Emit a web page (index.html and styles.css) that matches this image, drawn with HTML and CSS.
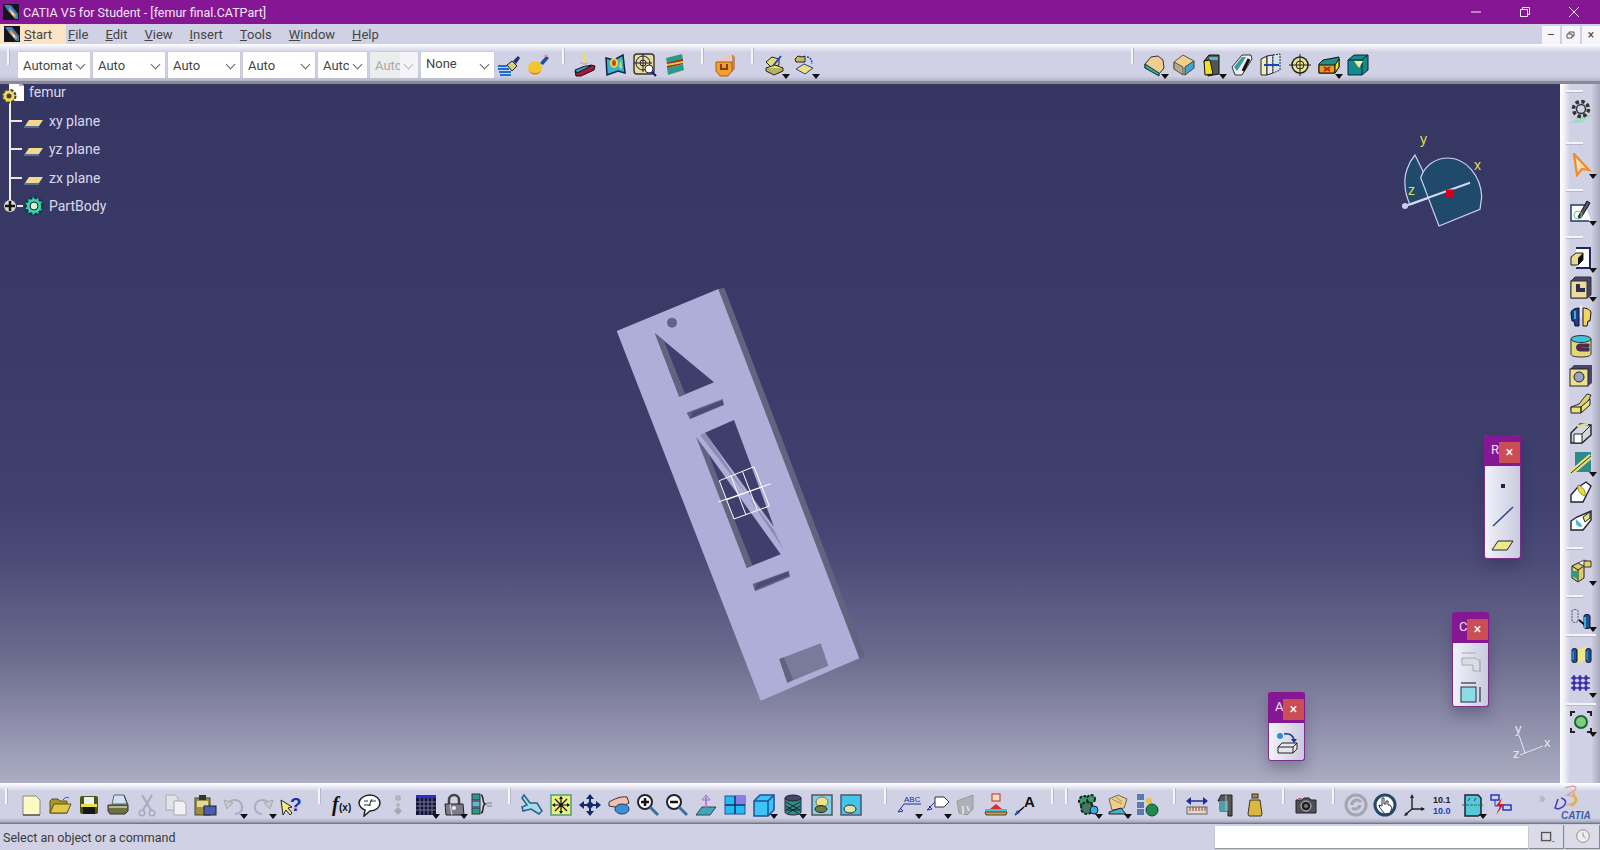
FILE: index.html
```html
<!DOCTYPE html>
<html lang="en">
<head>
<meta charset="utf-8">
<title>CATIA V5 for Student</title>
<link rel="stylesheet" href="styles.css">
</head>
<body>
<header class="title">
  <svg class="logo" viewBox="0 0 16 16"><rect width="16" height="16" fill="#14141e"/><path d="M1 1h7l7 9v5h-3L5 7z" fill="#3f7fb8"/><path d="M6 3l7 8-1 3-6-7z" fill="#e8a050"/><path d="M8 7l3 3-1 2z" fill="#fff"/></svg>
  <span class="title-text">CATIA V5 for Student - [femur final.CATPart]</span>
  <div class="win">
    <svg viewBox="0 0 12 12"><path d="M1 6h10" stroke="#eee" fill="none"/></svg>
    <svg viewBox="0 0 12 12"><path d="M1.5 3.5h7v7h-7zM3.5 3.5v-2h7v7h-2" stroke="#eee" fill="none"/></svg>
    <svg viewBox="0 0 12 12"><path d="M1 1l10 10M11 1L1 11" stroke="#eee" fill="none"/></svg>
  </div>
</header>
<nav class="menu">
  <div class="start">
    <svg class="logo" viewBox="0 0 16 16"><rect width="16" height="16" fill="#14141e"/><path d="M1 1h7l7 9v5h-3L5 7z" fill="#3f7fb8"/><path d="M6 3l7 8-1 3-6-7z" fill="#e8a050"/><path d="M8 7l3 3-1 2z" fill="#fff"/></svg>
    <span><u>S</u>tart</span>
  </div>
  <span class="m m1"><u>F</u>ile</span>
  <span class="m"><u>E</u>dit</span>
  <span class="m"><u>V</u>iew</span>
  <span class="m"><u>I</u>nsert</span>
  <span class="m"><u>T</u>ools</span>
  <span class="m"><u>W</u>indow</span>
  <span class="m"><u>H</u>elp</span>
  <div class="mdi">
    <span class="mb">&#8211;</span><span class="mb"><svg viewBox="0 0 10 10"><path d="M1 4h5v4H1zM3 4V2h5v4H6" stroke="#555" fill="none"/></svg></span><span class="mb">&#215;</span>
  </div>
</nav>
<section class="tb top">
  <i class="grip g0"></i>
  <div class="sel w72">Automat</div>
  <div class="sel w72">Auto</div>
  <div class="sel w72">Auto</div>
  <div class="sel w72">Auto</div>
  <div class="sel w49">Autc</div>
  <div class="sel w48 off">Autc</div>
  <div class="sel w73 up">None</div>
  <span class="b"><svg viewBox="0 0 24 24"><path d="M1 13h9M1 16h11M2 19h12M3 22h11" stroke="#1f6fd0" stroke-width="2"/><path d="M10 12l5-4 5 5-5 5z" fill="#d8cf7a" stroke="#222"/><path d="M16 8l5-5 2 2-4 6z" fill="#1c2f80"/></svg></span>
  <span class="b"><svg viewBox="0 0 24 24"><circle cx="9" cy="15" r="7" fill="#f2c62f"/><path d="M3 18a7 7 0 0 0 12 0 10 10 0 0 1-12 0z" fill="#d65ab0"/><path d="M14 10l6-7 3 2-6 7z" fill="#264a9c"/><path d="M17 3l4-2 1 3z" fill="#e0a080"/></svg></span>
  <i class="grip n"></i>
  <span class="b w30"><svg viewBox="0 0 24 24"><path d="M2 18l16-6 4 1-1 4-13 6H3z" fill="#a8163a" stroke="#111"/><path d="M2 17l10-4 6 0-14 7z" fill="#2fa3b8" stroke="#112"/><path d="M11 1v12" stroke="#e8e05a" stroke-width="2"/><path d="M8 5l3-4 3 4" fill="#e8e05a"/><path d="M7 9c3 3 6 2 8 1" stroke="#d68ac8" fill="none"/></svg></span>
  <span class="b w30"><svg viewBox="0 0 24 24"><path d="M3 5l8 2 9-5 2 18-7-2-11 4z" fill="#37b5c8" stroke="#10224a" stroke-width="1.5"/><ellipse cx="11" cy="10" rx="4" ry="5" fill="#e6d64a"/><ellipse cx="11" cy="10" rx="2" ry="3" fill="#c0452e"/><path d="M18 6l1 10-3-2z" fill="#e6d64a"/></svg></span>
  <span class="b w30"><svg viewBox="0 0 24 24"><rect x="1" y="1" width="20" height="20" rx="3" fill="#e9dc9c" stroke="#333" stroke-width="1.4"/><circle cx="10" cy="10" r="7" fill="none" stroke="#223"/><circle cx="10" cy="10" r="3" fill="none" stroke="#223"/><path d="M10 1v18M1 10h18" stroke="#223"/><circle cx="16" cy="16" r="4" fill="#fff" stroke="#224"/><path d="M19 19l4 4" stroke="#117" stroke-width="2"/></svg></span>
  <span class="b w30"><svg viewBox="0 0 24 24"><path d="M3 5l16-4 1 6-16 4z" fill="#2c9b86"/><path d="M4 10l16-4v5L4 15z" fill="#b01e1e"/><path d="M4 11l16-3v2L4 13z" fill="#e8c93a"/><path d="M4 15l16-4 1 6-16 5z" fill="#2c9b86"/></svg></span>
  <i class="grip"></i>
  <span class="b w30"><svg viewBox="0 0 24 24"><path d="M4 9l15-8 3 3-16 7z" fill="#eec6ae"/><path d="M19 1l3 3v12l-3 3z" fill="#b98a6a"/><path d="M3 9h16v9l-4 5H7l-4-5z" fill="#f0a030" stroke="#b4580c"/><path d="M8 11v5h6v-5" stroke="#8a3c00" fill="none" stroke-width="2"/></svg></span>
  <i class="grip"></i>
  <span class="b w30 dd"><svg viewBox="0 0 24 24"><path d="M3 9l6-5 7 2v6l-8 2z" fill="#e3dc6c" stroke="#222"/><path d="M3 15l9-3 8 3-9 4z" fill="#e9e27a" stroke="#222"/><path d="M3 15v3l8 4 9-4v-3" fill="#b9b25c" stroke="#222"/><path d="M10 13l8-10" stroke="#2244cc" stroke-width="2"/></svg></span>
  <span class="b w30 dd"><svg viewBox="0 0 24 24"><path d="M2 6l3-3 4 1 3-1v6H3z" fill="#c6bb60" stroke="#222"/><path d="M14 4c3 0 5 3 5 7" stroke="#2244cc" fill="none" stroke-width="1.5" stroke-dasharray="2 1"/><path d="M3 16l8-5 9 4-8 6z" fill="#e9e27a" stroke="#2d3ca0"/></svg></span>
  <i class="grip far"></i>
  <span class="b dd"><svg viewBox="0 0 24 24"><path d="M2 11l6-7 7-1 5 4 1 8-5 6-14-6z" fill="#f1cd8e" stroke="#333"/><path d="M2 11l14 9v3L2 15z" fill="#37a5a8" stroke="#133"/></svg></span>
  <span class="b"><svg viewBox="0 0 24 24"><path d="M2 9l9-7 11 6-9 14-11-6z" fill="#f1cd8e" stroke="#554"/><path d="M2 9l9 5v8l-9-6z" fill="#b9a78a" stroke="#554"/><path d="M13 14l9-6v7l-9 7z" fill="#41a6cf" stroke="#345"/></svg></span>
  <span class="b dd"><svg viewBox="0 0 24 24"><path d="M3 8l4 15 11-2V2H8z" fill="#555" stroke="#111"/><path d="M3 8l6-1 3 14-8 1z" fill="#f1e021" stroke="#111"/><path d="M8 4h9v3H9z" fill="#3ec0d8"/></svg></span>
  <span class="b"><svg viewBox="0 0 24 24"><path d="M2 14L12 2h9l1 4-10 16H5z" fill="#eee" stroke="#333"/><path d="M4 14L12 4h4L7 18z" fill="#3b9ba0"/><path d="M13 18l6-12" stroke="#111" stroke-width="3"/></svg></span>
  <span class="b"><svg viewBox="0 0 24 24"><path d="M2 6l6-3v19H2z" fill="#f3edb8" stroke="#223"/><path d="M8 3l6-1v18l-6 2z" fill="#e8e8f0" stroke="#223"/><path d="M14 2l7-1v16l-7 3z" fill="#cfe6ee" stroke="#223" stroke-dasharray="2 1"/><path d="M5 12h15" stroke="#2244aa" stroke-width="2"/></svg></span>
  <span class="b"><svg viewBox="0 0 24 24"><circle cx="12" cy="12" r="8" fill="#ece48c" stroke="#222" stroke-width="1.5"/><circle cx="12" cy="12" r="4" fill="none" stroke="#222"/><path d="M12 1v22M1 12h22" stroke="#222"/></svg></span>
  <span class="b dd"><svg viewBox="0 0 24 24"><path d="M2 11l4-4 16-3v10L18 20H2z" fill="#1e8f8a" stroke="#111"/><path d="M2 12h16v8H2z" fill="#e8a01c" stroke="#111"/><path d="M18 12l4-6v8l-4 6z" fill="#f1e021" stroke="#111"/><path d="M7 14l6 4M13 14l-6 4" stroke="#c02020" stroke-width="2"/></svg></span>
  <span class="b"><svg viewBox="0 0 24 24"><path d="M2 7l6-5h14v15l-6 5H2z" fill="#138a8c" stroke="#123"/><path d="M2 7h14v15M16 7l6-5" stroke="#123" fill="none"/><path d="M8 8h9l-4 7z" fill="#f5ec8a"/></svg></span>
</section>
<main class="work">
  <div class="view">
    <svg class="scene" viewBox="0 84 1560 699">
      <polygon class="side" points="718.3,289 724.3,287.7 865.3,657.3 859.3,658.3"/>
      <polygon class="face" points="616.7,331 718.3,289 859.3,658.3 760.7,700.7"/>
      <circle class="hole" cx="672" cy="322.7" r="5"/>
      <polygon class="void" points="655,333.3 714,382.3 679.3,396.7"/>
      <polygon class="side" points="655,333.3 664,341 685,394 679.3,396.7"/>
      <polygon class="side" points="686.7,412.7 722.7,399 724,405 690,419.3"/>
      <polygon class="slot" points="692,412.3 722.5,400.5 723.500,404.500 690.500,418"/>
      <polygon class="void" points="705,432.7 734,420 774,527"/>
      <polygon class="wall" points="700,435 705,432.7 783.3,549.3 774,530"/>
      <polygon class="void" points="708,453 780.7,554.3 746.7,567.7"/>
      <polygon class="side" points="696,436.7 708,453 752.7,565.7 746.7,567.7"/>
      <polygon class="side" points="752.7,584 788.7,570.7 790,576.7 755,591.3"/>
      <polygon class="slot" points="757,583.500 788,572 789,575.500 755,589.500"/>
      <polygon class="floor" points="779.3,659 820.7,643.3 828.3,665.7 787.3,682.7"/>
      <polygon class="side" points="779.3,659 784,657.5 793.3,680 787.3,682.7"/>
      <g class="grid">
        <path d="M719.3,480.7L754,466.7 769.3,506 734,519z"/>
        <path d="M731,476l15,39M742.500,471.500l15,39M726,500L762,487"/>
        <path d="M718.300,502L771,483.700"/>
      </g>
      <g class="compass">
        <path class="fan" d="M1415,155c-7,8-11,20-10,30 0,8 3,15 5,20l25-9z"/>
        <path class="fan" d="M1420.700,177.700C1425,165 1436,158 1448,158c18,0 33,18 33.700,38.700l-1.700,12.600L1439,226z"/>
        <path class="ax" d="M1405,206L1470,182.700"/>
        <circle class="ball" cx="1405" cy="206" r="3"/>
        <rect class="red" x="1446" y="189.500" width="8" height="8"/>
        <text x="1420" y="144">y</text><text x="1474" y="170">x</text><text x="1408" y="195">z</text>
      </g>
      <g class="tri">
        <path d="M1525,753L1519,735M1525,753L1543,746M1525,753L1520,755"/>
        <text x="1515" y="733">y</text><text x="1544" y="747">x</text><text x="1513" y="758">z</text>
      </g>
    </svg>

    <ul class="tree">
      <li class="root">
        <svg class="doc" viewBox="0 0 26 24"><path d="M9 0h10l5 5v15H9z" fill="#fff"/><path d="M19 0l5 5h-5z" fill="#9db7d8"/><circle cx="9" cy="15" r="6.500" fill="#e9d95c" stroke="#443" stroke-dasharray="3 1.500" stroke-width="2"/><circle cx="9" cy="15" r="2.500" fill="#443"/></svg>
        <span>femur</span>
      </li>
      <li><i class="tick"></i><svg class="pl" viewBox="0 0 20 10"><path d="M5 2h14l-4 6H1z" fill="#f2d98e"/><path d="M0 9h15" stroke="#7ca4c8"/></svg><span>xy plane</span></li>
      <li><i class="tick"></i><svg class="pl" viewBox="0 0 20 10"><path d="M5 2h14l-4 6H1z" fill="#f2d98e"/><path d="M0 9h15" stroke="#7ca4c8"/></svg><span>yz plane</span></li>
      <li><i class="tick"></i><svg class="pl" viewBox="0 0 20 10"><path d="M5 2h14l-4 6H1z" fill="#f2d98e"/><path d="M0 9h15" stroke="#7ca4c8"/></svg><span>zx plane</span></li>
      <li class="body"><svg class="plus" viewBox="0 0 14 14"><circle cx="7" cy="7" r="6" fill="#d8d8c8"/><path d="M7 2v10M2 7h10" stroke="#111" stroke-width="2.500"/></svg><i class="tick s"></i><svg class="pb" viewBox="0 0 24 24"><circle cx="12" cy="12" r="8.500" fill="#3ed6a8" stroke="#0d3f48" stroke-width="3" stroke-dasharray="3 2"/><circle cx="12" cy="12" r="4" fill="#d6f6c8" stroke="#114"/></svg><span>PartBody</span></li>
    </ul>

    <aside class="float fr">
      <header><span>R</span><b>&#215;</b></header>
      <span class="fi"><svg viewBox="0 0 24 24"><rect x="10" y="10" width="4" height="4" fill="#12284a"/></svg></span>
      <span class="fi"><svg viewBox="0 0 24 24"><path d="M2 22L22 3" stroke="#2d4a80" stroke-width="1.500"/></svg></span>
      <span class="fi"><svg viewBox="0 0 24 24"><path d="M7 7h15l-6 9H1z" fill="#efe88c" stroke="#223"/></svg></span>
    </aside>
    <aside class="float fc">
      <header><span>C</span><b>&#215;</b></header>
      <span class="fi"><svg viewBox="0 0 24 24"><path d="M3 8h12a6 6 0 0 1 6 6v7h-7v-6H3z" fill="#dcdce6" stroke="#aaa"/><path d="M3 3h14M21 9v13" stroke="#aaa"/></svg></span>
      <span class="fi"><svg viewBox="0 0 24 24"><rect x="2" y="7" width="15" height="15" fill="#8edbe8" stroke="#234"/><path d="M2 3h15M21 7v15" stroke="#111"/></svg></span>
    </aside>
    <aside class="float fa">
      <header><span>A</span><b>&#215;</b></header>
      <span class="fi"><svg viewBox="0 0 24 24"><circle cx="5" cy="5" r="3" fill="#2f8fd0"/><path d="M9 3c6-1 9 1 10 6" stroke="#1c2fa0" fill="none" stroke-width="1.500"/><path d="M16 8h6l-3 4z" fill="#1c2fa0"/><path d="M3 16l4-4h15v6l-4 4H3z" fill="#e6e6ee" stroke="#222"/><path d="M3 16h15v6M18 16l4-4" stroke="#222" fill="none"/></svg></span>
    </aside>
  </div>

  <aside class="rt">
    <i class="hgrip first"></i>
    <span class="rb pad-a"><svg viewBox="0 0 24 24"><path d="M2 24l8-8 14 0-12 8z" fill="#a4d8c8"/><circle cx="12" cy="10" r="7.500" fill="none" stroke="#333" stroke-width="3.500" stroke-dasharray="3.500 2.400"/><circle cx="12" cy="10" r="4.500" fill="none" stroke="#333" stroke-width="1.500"/></svg></span>
    <i class="hgrip"></i>
    <span class="rb dd"><svg viewBox="0 0 24 24"><path d="M5 1l3 21 5-6 7 1z" fill="#fde0b8" stroke="#f08a28" stroke-width="2.200"/></svg></span>
    <i class="hgrip"></i>
    <span class="rb dd"><svg viewBox="0 0 24 24"><path d="M2 6h14l6 16H2z" fill="#fff"/><path d="M16 6H2v16h18" stroke="#233a6a" fill="none" stroke-width="1.500"/><path d="M9 18L18 2l3 2-9 15z" fill="#556" stroke="#111"/><circle cx="9" cy="16" r="4" fill="none" stroke="#6fbf80"/></svg></span>
    <i class="hgrip"></i>
    <span class="rb dd"><svg viewBox="0 0 24 24"><path d="M7 2h14v20H7" fill="#fff" stroke="#1c2a6a" stroke-width="2"/><path d="M2 11l5-4h7v7l-5 5H2z" fill="#e9dc8c" stroke="#222"/><path d="M9 12l5-5v7l-5 5z" fill="#111"/></svg></span>
    <span class="rb dd"><svg viewBox="0 0 24 24"><path d="M2 6l4-4h16v18l-4 3H2z" fill="#44466a" stroke="#333"/><rect x="2" y="6" width="16" height="17" fill="#e9dc9c" stroke="#333"/><path d="M7 9h4v4h5v4H7z" fill="#2e2e55"/></svg></span>
    <span class="rb"><svg viewBox="0 0 24 24"><path d="M2 8c0-3 4-5 8-5v18H6l-1-5H3z" fill="#1e3f8a" stroke="#112"/><path d="M22 8c0-3-4-5-8-5v18h4l1-5h2z" fill="#f0d85c" stroke="#112"/><path d="M6 6v8" stroke="#3fb0c8" stroke-width="2"/><path d="M12 0v12" stroke="#fff"/></svg></span>
    <span class="rb"><svg viewBox="0 0 24 24"><path d="M2 5v15c0 2 4 3 10 3s10-1 10-3V5z" fill="#e3d778" stroke="#333"/><ellipse cx="12" cy="5" rx="10" ry="3.500" fill="#3fc4dc" stroke="#333"/><path d="M20 10h-9a3 3 0 0 0 0 7h9v-3h-8v-1h8z" fill="#7c1f2a" stroke="#123a7a"/></svg></span>
    <span class="rb"><svg viewBox="0 0 24 24"><path d="M1 6l4-4h18v18l-4 3H1z" fill="#44466a"/><rect x="1" y="6" width="18" height="17" fill="#ece08c" stroke="#222"/><circle cx="10" cy="14" r="5" fill="#9ea0c0" stroke="#222"/></svg></span>
    <span class="rb"><svg viewBox="0 0 24 24"><path d="M2 15l8-3 8-10 4 1-3 7-7 8H2z" fill="#d8cf7c" stroke="#333"/><path d="M2 15h10v6H2zM12 15l9-8v6l-9 8z" fill="#e9e27a" stroke="#222"/></svg></span>
    <span class="rb"><svg viewBox="0 0 24 24"><path d="M2 12L11 3l11 1v10l-9 8H2z" fill="#d6d6e0" stroke="#222" stroke-width="1.400"/><path d="M5 13h8v9H5zM13 13l9-9" stroke="#222" fill="#fff"/><path d="M8 5l11-2" stroke="#e9e27a" stroke-width="2"/></svg></span>
    <span class="rb dd"><svg viewBox="0 0 24 24"><path d="M6 2h16v20H6z" fill="#2f8a8a"/><path d="M2 23L22 6" stroke="#e9e27a" stroke-width="5"/><path d="M2 23L22 6" stroke="#223" stroke-width="1"/></svg></span>
    <span class="rb"><svg viewBox="0 0 24 24"><path d="M2 15l6-7 9-6 5 4-4 8-4 8H2z" fill="#fff" stroke="#223" stroke-width="1.400"/><path d="M9 5c5 2 8 6 7 11-4-1-8-5-7-11z" fill="#f1e021" stroke="#886"/></svg></span>
    <span class="rb"><svg viewBox="0 0 24 24"><path d="M2 12l6-4 14-6v9l-8 10H2z" fill="#fff" stroke="#223" stroke-width="1.400"/><path d="M7 10c2 3 6 4 6 8-5 0-7-3-6-8z" fill="#41b8d0"/><path d="M14 8l7-5v6l-5 4z" fill="#e9e27a" stroke="#223"/></svg></span>
    <i class="hgrip wide"></i>
    <span class="rb dd"><svg viewBox="0 0 24 24"><path d="M3 7l6-3 6 3v12l-6 4-6-4z" fill="#d8cf6c" stroke="#222"/><path d="M9 10v12M3 7l6 4 6-4" stroke="#222" fill="none"/><path d="M9 4l6-3 7 3-7 3z" fill="#eee" stroke="#555"/><path d="M15 2h7v6h-7z" fill="#e9cf5c" stroke="#334"/><path d="M3 12h5v8l-5-3z" fill="#22a08a"/></svg></span>
    <i class="hgrip"></i>
    <span class="rb dd"><svg viewBox="0 0 24 24"><path d="M3 5c0-2 6-2 6 0v10c0 2-6 2-6 0z" fill="none" stroke="#556" stroke-dasharray="2 1"/><path d="M10 14l6 5" stroke="#111" stroke-width="2"/><path d="M15 10c0-2 6-2 6 0v11c0 2-6 2-6 0z" fill="#1e4fa0" stroke="#112"/><path d="M15 11h2v11h-2z" fill="#3fb0c8"/></svg></span>
    <i class="hgrip s"></i>
    <span class="rb"><svg viewBox="0 0 24 24"><path d="M9 7l8-3v14l-8 3z" fill="#ece78a"/><path d="M3 8c0-2 5-2 5 0v11c0 2-5 2-5 0z" fill="#1e4fa0" stroke="#112"/><path d="M17 8c0-2 5-2 5 0v11c0 2-5 2-5 0z" fill="#1e4fa0" stroke="#112"/><path d="M4 9v9M18 9v9" stroke="#3fb0c8"/></svg></span>
    <span class="rb dd"><svg viewBox="0 0 24 24"><path d="M5 4v16M11 4v16M17 4v16M2 7h19M2 12h19M2 17h19" stroke="#3c2faa" stroke-width="1.500"/><path d="M5 7h.01M11 7h.01M17 7h.01M5 12h.01M11 12h.01M17 12h.01M5 17h.01M11 17h.01M17 17h.01" stroke="#3c2faa" stroke-width="4" stroke-linecap="round"/></svg></span>
    <i class="hgrip s2"></i>
    <span class="rb dd"><svg viewBox="0 0 24 24"><circle cx="12" cy="12" r="6" fill="#7ad07a" stroke="#1f5f3a" stroke-width="2"/><path d="M2 6V2h4M18 2h4v4M2 18v4h4M18 22h4v-4" stroke="#222" stroke-width="2" fill="none"/></svg></span>
  </aside>
</main>

<section class="tb bot">
  <i class="grip b0"></i>
  <span class="b"><svg viewBox="0 0 24 24"><path d="M4 3h13l4 4v15H4z" fill="#fdf8c4" stroke="#888"/><path d="M4 22h17" stroke="#333"/></svg></span>
  <span class="b"><svg viewBox="0 0 24 24"><path d="M2 8l2-2h6l2 2h7v12H2z" fill="#a89430" stroke="#5c5210"/><path d="M2 20l4-9h17l-4 9z" fill="#e0c848" stroke="#5c5210"/><path d="M15 7c2-3 4-3 6-2" stroke="#1f4ac0" fill="none"/></svg></span>
  <span class="b"><svg viewBox="0 0 24 24"><rect x="3" y="3" width="18" height="18" rx="2" fill="#4a5418"/><rect x="7" y="4" width="10" height="7" fill="#eee"/><rect x="6" y="14" width="12" height="7" fill="#161616"/><rect x="4" y="11" width="16" height="3" fill="#e8e04a"/></svg></span>
  <span class="b"><svg viewBox="0 0 24 24"><path d="M8 2h10l3 9H6z" fill="#cfe0f0" stroke="#666"/><path d="M2 12h20v6l-3 3H4l-2-3z" fill="#6d7040" stroke="#333"/><path d="M3 13h18v2H3z" fill="#b8b88c"/><path d="M18 2l4 10" stroke="#444"/></svg></span>
  <span class="b"><svg viewBox="0 0 24 24"><path d="M7 2l9 15M17 2L8 17" stroke="#a9a9b8" stroke-width="2"/><circle cx="7" cy="20" r="2.800" fill="none" stroke="#a9a9b8" stroke-width="1.500"/><circle cx="17" cy="20" r="2.800" fill="none" stroke="#a9a9b8" stroke-width="1.500"/></svg></span>
  <span class="b"><svg viewBox="0 0 24 24"><path d="M2 2h9l3 3v12H2z" fill="#e2e2ea" stroke="#aaa"/><path d="M10 8h9l3 3v11H10z" fill="#f0f0f5" stroke="#aaa"/></svg></span>
  <span class="b"><svg viewBox="0 0 24 24"><rect x="2" y="5" width="15" height="17" fill="#9a8f3c" stroke="#444"/><rect x="6" y="2" width="7" height="5" fill="#333"/><rect x="4" y="8" width="11" height="6" fill="#e3d89c"/><rect x="11" y="13" width="12" height="9" fill="#4a5eae" stroke="#223"/></svg></span>
  <span class="b dd"><svg viewBox="0 0 24 24"><path d="M4 13c4-8 14-8 16 0 1 5-3 8-7 8" stroke="#aaabbe" stroke-width="2" fill="none"/><path d="M2 7l9 3-6 6z" fill="#c8c8d4" stroke="#aaa"/></svg></span>
  <span class="b dd"><svg viewBox="0 0 24 24"><path d="M20 13c-4-8-14-8-16 0-1 5 3 8 7 8" stroke="#aaabbe" stroke-width="2" fill="none"/><path d="M22 7l-9 3 6 6z" fill="#c8c8d4" stroke="#aaa"/></svg></span>
  <span class="b"><svg viewBox="0 0 24 24"><path d="M1 7l2 15 3-5 4 5 2-2-4-5 4-1z" fill="#f1e88c" stroke="#222"/><text class="q" x="10" y="18">?</text></svg></span>
  <i class="grip"></i>
  <div class="g28">
  <span class="b"><svg viewBox="0 0 24 24"><text class="fx" x="2" y="18">f</text><text class="fx2" x="9" y="18">(x)</text></svg></span>
  <span class="b"><svg viewBox="0 0 24 24"><path d="M12 2c6 0 10 4 10 8s-4 8-10 8l-6 5 1-6c-3-1-6-4-6-7 0-4 5-8 11-8z" fill="#fff" stroke="#222" stroke-width="1.500"/><path d="M6 8h4M12 8h6M6 12h7M14 6l-3 7" stroke="#333"/></svg></span>
  <span class="b"><svg viewBox="0 0 24 24"><circle cx="12" cy="5" r="3" fill="#b4b4c0"/><circle cx="12" cy="12" r="2" fill="#b4b4c0"/><path d="M12 14l4 4-4 4-4-4z" fill="#a8a8b4"/></svg></span>
  <span class="b dd"><svg viewBox="0 0 24 24"><rect x="2" y="2" width="20" height="20" fill="#15153a"/><rect x="2" y="2" width="20" height="3" fill="#2b2be0"/><path d="M6 5v17M10 5v17M14 5v17M18 5v17M2 9h20M2 13h20M2 17h20" stroke="#8888a8" stroke-width=".8"/></svg></span>
  <span class="b dd"><svg viewBox="0 0 24 24"><path d="M7 11V7a5 5 0 0 1 10 0v4" fill="none" stroke="#444" stroke-width="2.500"/><path d="M3 11h18l1 11H4z" fill="#7d7d88" stroke="#222"/><circle cx="12" cy="15" r="2" fill="#eee"/><path d="M8 11l2 11" stroke="#ddd"/></svg></span>
  <span class="b"><svg viewBox="0 0 24 24"><rect x="2" y="1" width="8" height="6" fill="#2b9a8a" stroke="#333"/><rect x="2" y="8" width="8" height="6" fill="#62b4d8" stroke="#333"/><rect x="2" y="15" width="8" height="6" fill="#2b9a8a" stroke="#333"/><path d="M11 2c3 0 1 8 4 9-3 1-1 9-4 9" stroke="#222" fill="none" stroke-width="1.500"/><path d="M17 10h5M17 13h5" stroke="#777"/></svg></span>
  </div>
  <i class="grip"></i>
  <span class="b"><svg viewBox="0 0 24 24"><path d="M4 2l6 8 7 0 5 8-3 3-8-5-8 2-1-4 5-2L2 5z" fill="#a6dce8" stroke="#2a5f90" stroke-width="1.500"/></svg></span>
  <span class="b"><svg viewBox="0 0 24 24"><rect x="2" y="2" width="20" height="20" fill="#edf07a" stroke="#4d9f7c" stroke-width="1.500"/><path d="M12 4v16M4 12h16M6 6l12 12M18 6L6 18" stroke="#111" stroke-width="1.200"/><path d="M12 3l2 3h-4zM12 21l2-3h-4zM3 12l3-2v4zM21 12l-3-2v4z" fill="#111"/></svg></span>
  <span class="b"><svg viewBox="0 0 24 24"><path d="M12 4v16M4 12h16" stroke="#112a6a" stroke-width="2"/><path d="M12 1l4 5H8zM12 23l4-5H8zM1 12l5-4v8zM23 12l-5-4v8z" fill="#112a6a"/><circle cx="12" cy="12" r="3" fill="#112a6a"/></svg></span>
  <span class="b"><svg viewBox="0 0 24 24"><path d="M2 9c5-3 12-6 18-5l2 6-6 3-8 1-6-1z" fill="#f2c0b0" stroke="#333"/><ellipse cx="15" cy="16" rx="7" ry="5" fill="#3f8fd0" stroke="#1c3a78"/></svg></span>
  <span class="b"><svg viewBox="0 0 24 24"><circle cx="9" cy="9" r="7" fill="#fff" stroke="#223" stroke-width="2"/><path d="M9 5v8M5 9h8" stroke="#111" stroke-width="2.500"/><path d="M14 14l8 8" stroke="#3f6fa0" stroke-width="3"/></svg></span>
  <span class="b"><svg viewBox="0 0 24 24"><circle cx="9" cy="9" r="7" fill="#fff" stroke="#223" stroke-width="2"/><path d="M5 9h8" stroke="#111" stroke-width="2.500"/><path d="M14 14l8 8" stroke="#3f6fa0" stroke-width="3"/></svg></span>
  <span class="b"><svg viewBox="0 0 24 24"><path d="M2 22l6-8h14l-6 8z" fill="#3fa8b8" stroke="#345"/><path d="M12 4v13" stroke="#a06fc0" stroke-width="1.500"/><path d="M8 7l4-5 4 5z" fill="none" stroke="#a06fc0"/></svg></span>
  <span class="b"><svg viewBox="0 0 24 24"><rect x="2" y="3" width="20" height="18" fill="#24bdf0" stroke="#2a4aa0"/><rect x="13" y="3" width="9" height="8" fill="#8a7ce0"/><path d="M12 3v18M2 12h20" stroke="#1a2a70" stroke-width="1.500"/></svg></span>
  <span class="b dd"><svg viewBox="0 0 24 24"><path d="M2 8l6-6h14v15l-6 6H2z" fill="#3ec4f4" stroke="#1e4fa0" stroke-width="1.500"/><path d="M2 8h14v15M16 8l6-6" stroke="#1e4fa0" fill="none" stroke-width="1.500"/></svg></span>
  <span class="b dd"><svg viewBox="0 0 24 24"><path d="M4 5v14c0 4 16 4 16 0V5z" fill="#2f8f8f" stroke="#223"/><ellipse cx="12" cy="5" rx="8" ry="3" fill="#446" stroke="#223"/><path d="M5 9l14 8M5 13l12 7M19 9L5 17M19 13L7 20M5 17h14" stroke="#111" stroke-width=".8"/></svg></span>
  <span class="b"><svg viewBox="0 0 24 24"><rect x="2" y="2" width="20" height="20" fill="#7fd0e8" stroke="#555" stroke-width="1.500"/><ellipse cx="12" cy="9" rx="6" ry="5" fill="#ece48c" stroke="#776"/><ellipse cx="11" cy="16" rx="6" ry="3.500" fill="#6d7a40" stroke="#223"/></svg></span>
  <span class="b"><svg viewBox="0 0 24 24"><rect x="2" y="2" width="20" height="20" fill="#44c4ea" stroke="#556" stroke-width="1.500"/><ellipse cx="11" cy="16" rx="6" ry="4" fill="#e3e0a8" stroke="#223"/></svg></span>
  <i class="grip gb"></i>
  <span class="b dd"><svg viewBox="0 0 24 24"><text class="abc" x="7" y="9">ABC</text><path d="M7 11h17" stroke="#222ca0"/><path d="M7 11L1 19M1 19l5-1-3-3" stroke="#222ca0" fill="none"/></svg></span>
  <span class="b dd"><svg viewBox="0 0 24 24"><path d="M9 4h9l5 5-5 5H9z" fill="#fff" stroke="#333"/><path d="M9 9l-8 8" stroke="#222ca0"/><path d="M1 17l5-1-3-3" stroke="#222ca0" fill="none"/></svg></span>
  <span class="b"><svg viewBox="0 0 24 24"><path d="M2 8l16-6v14l-6 6-8-2z" fill="#b0b0b8" stroke="#999"/><path d="M8 13v8M12 13l2 5" stroke="#ddd" stroke-width="2"/></svg></span>
  <span class="b"><svg viewBox="0 0 24 24"><rect x="8" y="1" width="8" height="7" fill="#f6e0c0" stroke="#c42828"/><path d="M12 8v3M6 16l6-5 6 5z" fill="#e02828"/><path d="M1 16h22v3H1z" fill="#3ec4d4"/><path d="M1 19h22l-1 3H2z" fill="#e09a2c" stroke="#444"/></svg></span>
  <span class="b"><svg viewBox="0 0 24 24"><text class="la" x="11" y="14">A</text><path d="M11 14L2 22" stroke="#111" stroke-width="1.500"/><path d="M2 22l5-2-3-3z" fill="#1f4ac0"/></svg></span>
  <i class="grip"></i>
  <i class="grip gc"></i>
  <span class="b dd"><svg viewBox="0 0 24 24"><circle cx="7" cy="8" r="5" fill="#38a058" stroke="#123" stroke-dasharray="3 1.500" stroke-width="2"/><circle cx="14" cy="6" r="4" fill="#38a058" stroke="#123" stroke-dasharray="3 1.500" stroke-width="2"/><circle cx="10" cy="15" r="6" fill="#3e7a5e" stroke="#123" stroke-dasharray="3 1.500" stroke-width="2"/><circle cx="17" cy="17" r="4" fill="#3fa8e0" stroke="#123"/></svg></span>
  <span class="b dd"><svg viewBox="0 0 24 24"><path d="M3 6l9-4 9 4-3 9-12 2z" fill="#efd08a" stroke="#665"/><path d="M3 19l12-4 5 6H3z" fill="#48b0c8" stroke="#223"/><path d="M6 6l10 5M10 4l6 5" stroke="#a86"/></svg></span>
  <span class="b"><svg viewBox="0 0 24 24"><rect x="2" y="1" width="7" height="6" fill="#5a7ab0"/><rect x="2" y="9" width="7" height="6" fill="#5a7ab0"/><rect x="2" y="16" width="7" height="6" fill="#5a7ab0"/><circle cx="14" cy="8" r="3" fill="#e8c43c"/><circle cx="17" cy="17" r="6" fill="#1f8a50" stroke="#143"/></svg></span>
  <i class="grip"></i>
  <span class="b"><svg viewBox="0 0 24 24"><path d="M3 8h18" stroke="#1f2ca0" stroke-width="1.500"/><path d="M1 8l5-4v8zM23 8l-5-4v8z" fill="#1f2ca0"/><rect x="2" y="14" width="20" height="7" fill="#e0d8c8" stroke="#666"/><path d="M5 14v4M8 14v4M11 14v4M14 14v4M17 14v4M20 14v4" stroke="#a33"/></svg></span>
  <span class="b"><svg viewBox="0 0 24 24"><path d="M7 2h11v21h-4v-5H6V8H4z" fill="#555" stroke="#222"/><path d="M5 8h9v10H5z" fill="#4aa0a8"/><path d="M12 2v16" stroke="#bbb"/></svg></span>
  <span class="b"><svg viewBox="0 0 24 24"><rect x="9" y="1" width="6" height="4" fill="#a88a30" stroke="#333"/><path d="M7 7h10l2 14-1 2H6l-1-2z" fill="#dcb83c" stroke="#333"/></svg></span>
  <i class="grip"></i>
  <span class="b"><svg viewBox="0 0 24 24"><path d="M2 7h6l2-2h5l2 2h5v13H2z" fill="#4f4f58" stroke="#222"/><circle cx="12" cy="13" r="5" fill="#222" stroke="#ccc"/><circle cx="12" cy="13" r="2" fill="#777"/><path d="M4 6h4" stroke="#b66" stroke-width="2"/></svg></span>
  <i class="grip"></i>
  <span class="b"><svg viewBox="0 0 24 24"><circle cx="12" cy="12" r="10" fill="none" stroke="#a5a5b2" stroke-width="3"/><path d="M8 12a5 5 0 0 1 9-3M16 12a5 5 0 0 1-8 3" stroke="#a5a5b2" stroke-width="3" fill="none"/></svg></span>
  <span class="b"><svg viewBox="0 0 24 24"><circle cx="12" cy="12" r="10" fill="#fff" stroke="#24486a" stroke-width="3"/><path d="M12 21l-5-6-1-3 3 1V5h2v6h2V8h2v4h2l2 3-2 5z" fill="#fff" stroke="#333"/></svg></span>
  <span class="b"><svg viewBox="0 0 24 24"><path d="M10 3v13M10 16l12 0M10 16L3 22" stroke="#222" stroke-width="1.400"/><path d="M10 1l2 4H8zM23 16l-4-2v4zM2 23l4-1-2-3z" fill="#222"/></svg></span>
  <span class="b"><svg viewBox="0 0 24 24"><text class="n1" x="2" y="10">10.1</text><text class="n2" x="2" y="21">10.0</text></svg></span>
  <span class="b dd"><svg viewBox="0 0 24 24"><path d="M5 2h13l3 3v16l-3 2H5z" fill="#57c8d8" stroke="#223" stroke-width="1.500"/><path d="M2 12h21" stroke="#1a7a50" stroke-dasharray="3 1"/><path d="M8 8l2-3M14 8l2-3" stroke="#2a3a90"/></svg></span>
  <span class="b"><svg viewBox="0 0 24 24"><rect x="2" y="2" width="8" height="5" fill="none" stroke="#1f3cc0" stroke-width="1.500"/><path d="M6 7v6l6 0" stroke="#1f3cc0" fill="none"/><rect x="14" y="12" width="8" height="5" fill="none" stroke="#1f3cc0" stroke-width="1.500"/><path d="M13 5L7 13h4L7 22l8-11h-4z" fill="#e01818"/></svg></span>
  <span class="more">&#187;</span>
  <svg class="ds" viewBox="0 0 44 36"><path d="M12 3c8-3 14-2 9 3l-7 4 7 1c5 2 1 8-7 9" fill="none" stroke="#e0a0a0" stroke-width="1.500"/><path d="M8 13c7 2 6 8-3 11l-3-1 3-9" fill="none" stroke="#4a3ab8" stroke-width="1.500"/><path d="M22 8c-6 4 8 5-4 13" fill="none" stroke="#e2b440" stroke-width="2.500"/><text x="8" y="34">CATIA</text></svg>
</section>

<footer class="status">
  <span class="msg">Select an object or a command</span>
  <div class="inp"></div>
  <span class="sb"><svg viewBox="0 0 20 20"><rect x="4" y="5" width="10" height="9" fill="none" stroke="#555" stroke-width="1.500"/><path d="M16 15h2" stroke="#555"/></svg></span>
  <span class="sb"><svg viewBox="0 0 20 20"><circle cx="10" cy="9" r="7" fill="#eee" stroke="#888"/><path d="M10 5v4l3 2" stroke="#888" fill="none"/></svg></span>
</footer>
</body>
</html>
```
FILE: styles.css
```css
* { box-sizing: border-box; }
html, body { margin: 0; padding: 0; }
body {
  width: 1600px; height: 850px; overflow: hidden;
  display: flex; flex-direction: column;
  background: #d0d1e4;
  font-family: Roboto, "Noto Sans", sans-serif;
  font-size: 13px; color: #333;
}
svg { display: block; }
i { display: block; font-style: normal; }

.title { height: 24px; background: #861794; color: #f2e6f4; display: flex; align-items: center; padding-left: 3px; flex: none; }
.logo { width: 16px; height: 16px; flex: none; }
.title-text { margin-left: 4px; font-size: 12.500px; }
.win { margin-left: auto; display: flex; }
.win svg { width: 12px; height: 12px; margin-right: 37px; }
.win svg:last-child { margin-right: 20px; }

.menu { height: 20px; background: #d0d1e4; display: flex; align-items: center; flex: none; position: relative; color: #444; }
.start { width: 66px; height: 100%; background: #fbe3c4; display: flex; align-items: center; gap: 4px; padding-left: 4px; }
.m { margin-left: 17px; }
.m.m1 { margin-left: 2px; }
.mdi { margin-left: auto; display: flex; gap: 2px; align-self: flex-end; padding-bottom: 0; }
.mb { width: 18px; height: 18px; background: #f5f5fa; display: flex; align-items: center; justify-content: center; color: #444; font-size: 12px; line-height: 1; }
.mb svg { width: 10px; height: 10px; }

.tb { display: flex; align-items: center; flex: none; background: linear-gradient(#fff 0, #eeeef8 3px, #d0d1e4 8px, #d0d1e4 80%, #b4b5c8 92%, #8a8a94 93%, #8a8a94 100%); }
.top { height: 40px; padding-top: 2px; }
.bot { height: 41px; padding-top: 3px; background: linear-gradient(#fff 0, #f0f0fa 3px, #d0d1e4 8px, #d0d1e4 85%, #a8a9bc 96%, #77777f 97%, #77777f 100%); position: relative; }

.grip { width: 3px; height: 16px; background: #f4f4fb; margin: -18px 6px 0 11px; flex: none; border-right: 1px solid #b8b8c8; }
.grip.n { margin-left: 10px; margin-right: 5px; }
.grip.g0 { margin: -16px 8px 0 7px; }
.grip.far { margin-left: 311px; margin-right: 6px; }
.bot .grip { margin-left: 12px; margin-right: 6.500px; }
.bot .grip.b0 { margin-left: 5px; margin-right: 8px; }
.bot .grip.gb { margin-left: 19px; margin-right: 7px; }
.bot .grip.gc { margin-left: 4px; }

.sel { height: 26px; background: #fff; margin-right: 3px; flex: none; position: relative; display: flex; align-items: center; padding-left: 5px; font-size: 13px; color: #444; overflow: hidden; white-space: nowrap; box-shadow: 0 0 1px #aaa; }
.sel::after { content: ""; position: absolute; right: 0; top: 0; bottom: 0; width: 18px; background: #fff; }
.sel::before { content: ""; position: absolute; right: 6px; top: 9px; width: 6px; height: 6px; border-right: 1px solid #666; border-bottom: 1px solid #666; transform: rotate(45deg); z-index: 1; }
.w72 { width: 72px; } .w49 { width: 49px; } .w48 { width: 48px; } .w73 { width: 73px; margin-right: 0; }
.off { background: #eceded; color: #a8a8a8; }
.off::after { background: #f4f4f8; }
.off::before { border-color: #bbb; }
.up { padding-bottom: 4px; }

.b { width: 29px; height: 28px; flex: none; display: flex; align-items: center; justify-content: center; position: relative; }
.b svg { width: 24px; height: 24px; }
.w30 { width: 30px; }
.g28 { display: flex; }
.g28 .b { width: 28px; }
.dd::after { content: ""; position: absolute; right: 0; bottom: 0; border: 4px solid transparent; border-top: 5px solid #111; border-bottom: 0; }

.work { flex: 1; display: flex; min-height: 0; }
.view { flex: 1; position: relative; overflow: hidden; background: linear-gradient(#363663 0, #3b3b69 40%, #414170 60%, #4b4b78 68%, #6c6c8f 82%, #acadc3 100%); }
.scene { position: absolute; inset: 0; width: 1560px; height: 699px; }
.face { fill: #aeaed8; } .side { fill: #63637f; } .void { fill: #3f3f6e; } .wall { fill: #8c8cb4; } .floor { fill: #7a7a9c; }
.slot { fill: #4a4a78; }
.hole { fill: #63638a; }
.grid path { fill: none; stroke: #fff; stroke-width: 1; }
.fan { fill: #1f4a6c; stroke: #cfd0f2; stroke-width: 1.200; }
.ax { stroke: #d6d6f4; stroke-width: 2; fill: none; }
.ball { fill: #cfc8f0; } .red { fill: #d00018; }
.compass text { fill: #e6dc5c; font: 14px "Liberation Sans", sans-serif; }
.tri path { stroke: #e8e8f2; fill: none; }
.tri text { fill: #e8e8f2; font: 13px "Liberation Sans", sans-serif; }

.tree { position: absolute; left: 0; top: 0; margin: 0; padding: 0; list-style: none; color: #d9daec; font-size: 14px; width: 130px; }
.tree::before { content: ""; position: absolute; left: 9px; top: 16px; width: 2px; height: 106px; background: #eef0e8; }
.tree li { height: 28.500px; position: relative; display: flex; align-items: center; }
.root { margin-top: -6px; }
.root span { margin-left: 3px; }
.doc { width: 26px; height: 24px; margin-top: 2px; position: relative; }
.tick { width: 12px; height: 2px; background: #e8e8e0; margin-left: 10px; flex: none; }
.tick.s { width: 6px; margin-left: 0; }
.pl { width: 20px; height: 10px; margin: 4px 5px 0 2px; flex: none; }
.plus { width: 14px; height: 14px; margin-left: 3px; position: relative; flex: none; }
.pb { width: 24px; height: 24px; margin: 0 3px 0 -1px; flex: none; }

.float { position: absolute; width: 37px; background: linear-gradient(90deg, #f2f2fb, #c9cadd); border: 1px solid #7d2d8c; border-top: 0; border-radius: 3px; box-shadow: 0 8px 14px rgba(30,30,60,.28); display: flex; flex-direction: column; align-items: center; padding-bottom: 3px; }
.float header { width: 37px; flex: none; margin-left: -1px; margin-right: -1px; height: 31px; background: #861794; border-radius: 3px 3px 0 0; display: flex; color: #eed; font-size: 13px; padding: 7px 1px 0 7px; position: relative; color: #f0e0f6; align-self: flex-start; }
.float header b { position: absolute; right: 1px; top: 7px; width: 21px; height: 21px; background: #c94f55; color: #fff; font-weight: 400; font-size: 14px; line-height: 20px; text-align: center; }
.fi { width: 28px; height: 30px; display: flex; align-items: center; justify-content: center; flex: none; }
.fi svg { width: 24px; height: 24px; }
.fr { left: 1484px; top: 351px; height: 124px; }
.fr header { margin-bottom: 5px; }
.fc { left: 1452px; top: 528px; height: 95px; }
.fc header { margin-bottom: 4px; }
.fa { left: 1268px; top: 608px; height: 69px; }
.fa header { margin-bottom: 5px; }

.rt { width: 40px; flex: none; display: flex; flex-direction: column; align-items: stretch; padding-top: 6px; background: linear-gradient(90deg, #fff 0, #f2f2fa 4px, #d0d1e4 10px, #d0d1e4 78%, #a8a8bb 100%); }
.hgrip { height: 3px; width: 17px; background: #f4f4fb; margin: 9.500px 0 5px 6px; flex: none; border-bottom: 1px solid #b8b8c8; }
.hgrip.first { margin-top: 0; margin-bottom: 3.500px; }
.hgrip.wide { margin-top: 12px; margin-bottom: 6px; }
.hgrip.s { width: 30px; margin: 2px 0 2px 6px; }
.hgrip.s2 { width: 30px; margin: 5px 0 2px 6px; }
.rb { height: 29.200px; width: 32px; margin-left: 5px; flex: none; display: flex; align-items: center; justify-content: center; position: relative; }
.rb svg { width: 24px; height: 24px; }
.pad-a { margin-bottom: 7px; }

.status { height: 26px; flex: none; background: #d0d1e4; display: flex; align-items: center; }
.msg { margin-left: 3px; color: #3a3a3a; font-size: 12.500px; }
.inp { margin-left: auto; width: 313px; height: 22px; background: #fff; box-shadow: 0 1px 1px #999; }
.sb { width: 35px; height: 24px; margin-left: 1px; display: flex; align-items: center; justify-content: center; background: #dcdce8; box-shadow: inset -1px -1px 0 #888; }
.sb svg { width: 18px; height: 18px; }

.q { font: 700 19px "Liberation Sans", sans-serif; fill: #1f2fa8; }
.fx { font: italic 700 20px "Liberation Serif", serif; fill: #111; }
.fx2 { font: 700 10px "Liberation Sans", sans-serif; fill: #111; }
.abc { font: 8px "Liberation Sans", sans-serif; fill: #222ca0; }
.la { font: 700 15px "Liberation Sans", sans-serif; fill: #111; }
.n1 { font: 700 9px "Liberation Sans", sans-serif; fill: #222; }
.n2 { font: 700 9px "Liberation Sans", sans-serif; fill: #1f3cc0; }
.more { width: 29px; text-align: center; color: #a6a6ba; font-size: 14px; margin-top: -14px; margin-left: 12px; flex: none; }
.ds { width: 44px; height: 36px; position: absolute; right: 3px; top: 2px; }
.ds text { font: italic 700 10px "Liberation Sans", sans-serif; fill: #3f5fa8; }
```
